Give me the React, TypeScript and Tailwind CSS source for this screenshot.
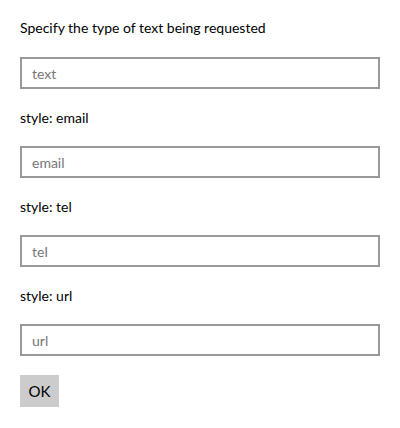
import React from "react";

const font = { fontFamily: 'Lato, "Noto Sans", sans-serif' };

function Field({ label, placeholder, first }: { label?: string; placeholder: string; first?: boolean }) {
  return (
    <div className="flex flex-col">
      {label && <div className="mt-[18px] h-5 pt-px text-[14px] leading-5 text-black">{label}</div>}
      <input
        className={`${first ? "mt-5" : "mt-[19px]"} box-border h-8 w-[360px] border-2 border-[#999999] bg-white px-[10px] text-[14px] text-black outline-none placeholder:text-[#767676]`}
        placeholder={placeholder}
        style={font}
      />
    </div>
  );
}

export default function App() {
  return (
    <div className="min-h-[428px] w-[400px] bg-white px-5 pt-[17px]" style={font}>
      <div className="h-5 pt-px text-[14px] leading-5 text-black">Specify the type of text being requested</div>
      <Field placeholder="text" first />
      <Field label="style: email" placeholder="email" />
      <Field label="style: tel" placeholder="tel" />
      <Field label="style: url" placeholder="url" />
      <button
        className="mt-[19px] flex h-8 w-[39px] items-center justify-center bg-[#cccccc] text-[15px] leading-5 text-black"
        style={font}
      >
        OK
      </button>
    </div>
  );
}
